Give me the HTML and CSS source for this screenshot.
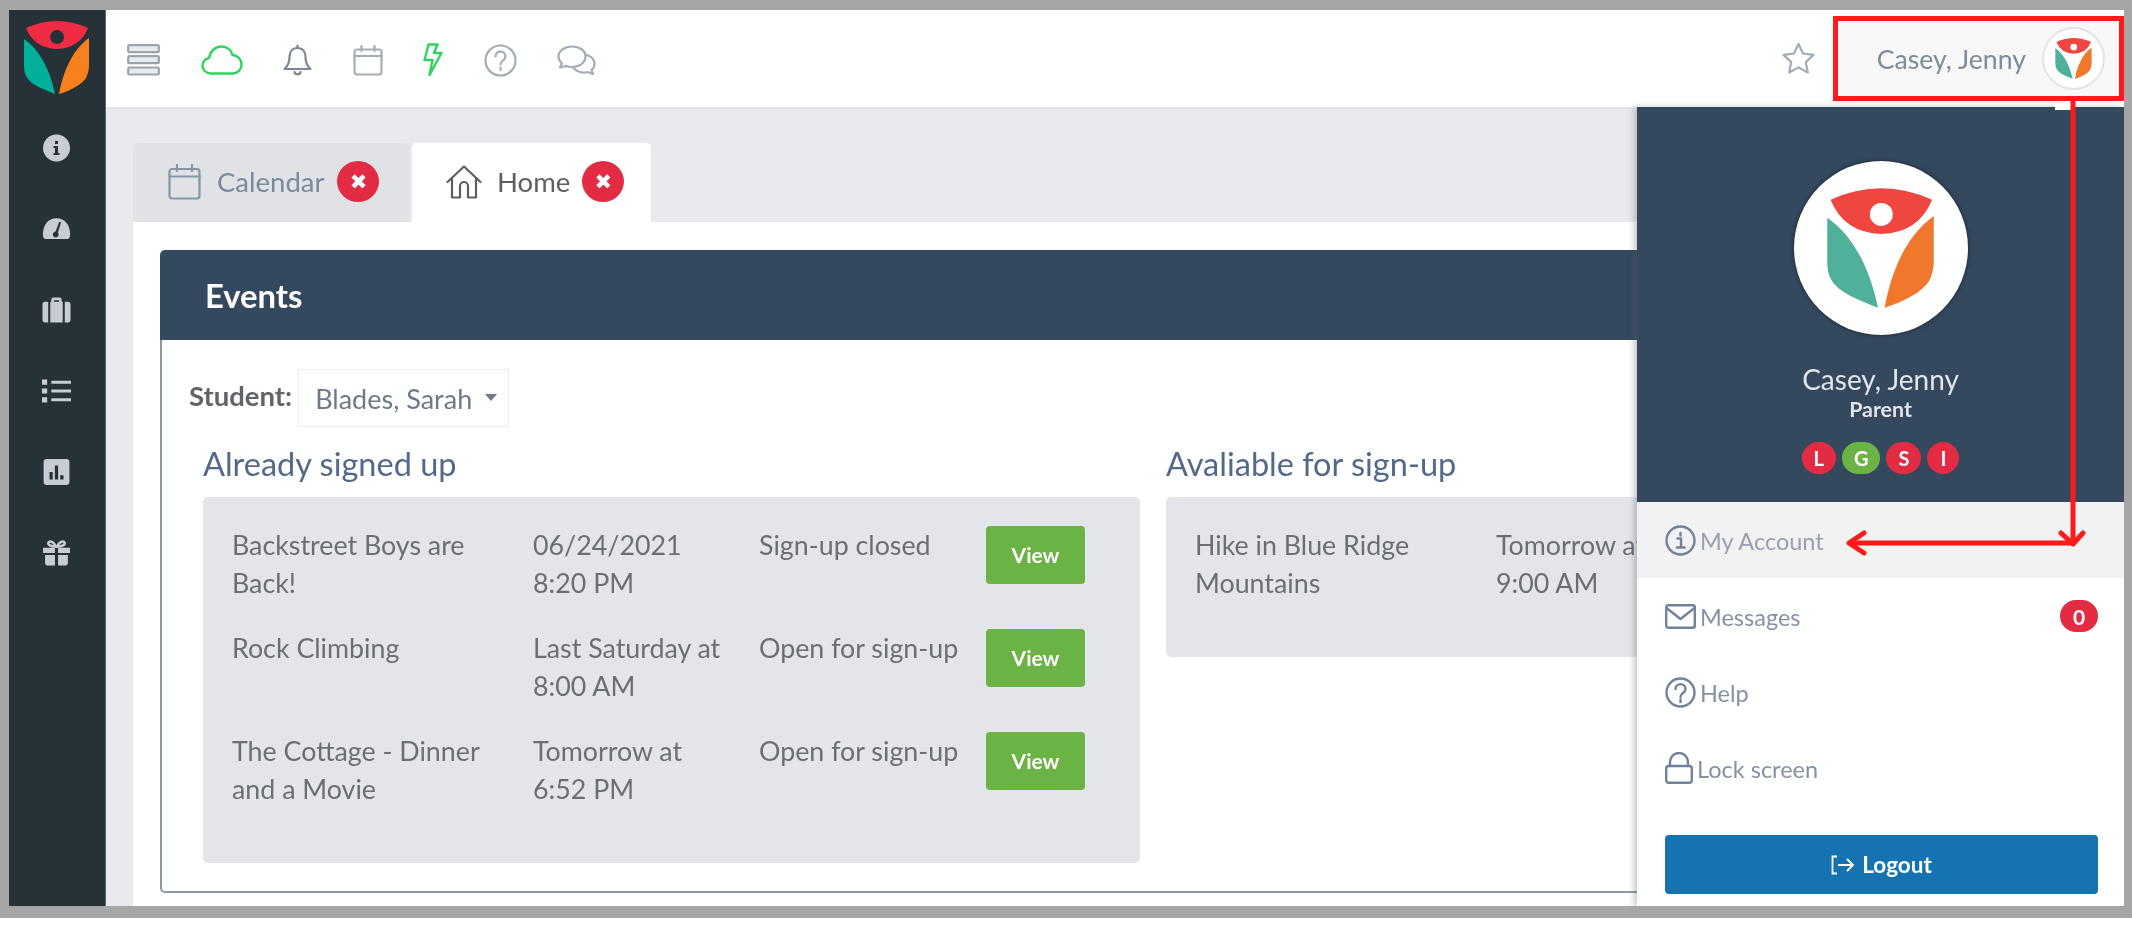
FILE: index.html
```html
<!DOCTYPE html>
<html lang="en">
<head>
<meta charset="utf-8">
<title>Events</title>
<link rel="stylesheet" href="styles.css">
</head>
<body>
<div class="shot">
  <div class="app">
    <aside class="sidebar">
      <svg class="side-logo" viewBox="0 0 65 73">
        <g transform="translate(-24 -21)">
          <path fill="#f02c45" d="M26 28Q57 14 88 28Q80 48 57 49Q34 48 26 28Z"/>
          <circle fill="#263238" cx="57" cy="37" r="7"/>
          <path fill="#00b09b" d="M24 39C40 50 50 70 55 94C40 88 30 84 26 76Q24 72 24 66Z"/>
          <path fill="#f7811c" d="M89 38C72 50 63 72 59 94C72 90 82 84 86 78Q89 72 89 66Z"/>
        </g>
      </svg>
      <nav class="side-nav">
        <svg class="side-icon" viewBox="0 0 28 28"><circle cx="14" cy="14" r="13.5"/><path class="cut" d="M12.5 7h3v3h-3zM11 12h4.500v7H17v2h-6v-2h1.500v-5H11z"/></svg>
        <svg class="side-icon" viewBox="0 0 32 28"><path d="M16 2C7 2 1 9 1 20c0 3 1 5 3 5h24c2 0 3-2 3-5C31 9 25 2 16 2Z"/><path class="cut" d="M19 6l2 .8-3.500 11a3.200 3.200 0 1 1-2.500-1Z"/></svg>
        <svg class="side-icon" viewBox="0 0 28 26"><path d="M9 5V3a2 2 0 0 1 2-2h6a2 2 0 0 1 2 2v2h1v20H8V5Zm2.500 0h5V3.500h-5ZM6 5v20H3a2.500 2.500 0 0 1-2.500-2.500v-15A2.500 2.500 0 0 1 3 5Zm16 0h3a2.500 2.500 0 0 1 2.500 2.500v15A2.500 2.500 0 0 1 25 25h-3Z"/></svg>
        <svg class="side-icon" viewBox="0 0 28 24"><path d="M0 1h5v5H0zM9 2h19v3H9zM0 9.500h5v5H0zM9 10.500h19v3H9zM0 18h5v5H0zM9 19h19v3H9z"/></svg>
        <svg class="side-icon" viewBox="0 0 26 26"><rect x="1" y="1" width="24" height="24" rx="3"/><path class="cut" d="M6.500 13h3v7h-3zM11.500 7h3v13h-3zM16.500 16h3v4h-3z"/></svg>
        <svg class="side-icon" viewBox="0 0 28 26"><path d="M1 8h11.500v5H1zM15.500 8H27v5H15.500zM3 15h9.500v10H5a2 2 0 0 1-2-2zM15.500 15H25v8a2 2 0 0 1-2 2h-7.500z"/><path class="bow" d="M13.500 7C11 2 8 1 6.500 2.500S7 7 13.500 7c1-.1 0 0 1 0C21 7 23 4 21.500 2.500S17 2 14.500 7"/></svg>
      </nav>
    </aside>

    <main class="main">
      <header class="topbar">
        <div class="tools">
          <svg class="tool" width="33" height="32" viewBox="0 0 33 32"><g class="line-bars"><rect x="1.200" y="1.200" width="30.600" height="7" rx="1"/><rect x="1.200" y="12.200" width="30.600" height="7" rx="1"/><rect x="1.200" y="23.500" width="30.600" height="7" rx="1"/></g></svg>
          <svg class="tool" width="42" height="30" viewBox="0 0 42 30"><path class="line-green" d="M10 28.500C4.500 28.500 1.500 24.500 1.500 20.500c0-4 3-7 6.500-7.500C9 6.500 14 1.500 20.500 1.500c5.500 0 10 3.500 11 8.500 5.500.5 9 4.500 9 9.500 0 5-3.500 9-9.500 9Z"/></svg>
          <svg class="tool" width="29" height="33" viewBox="0 0 29 33"><g class="line-dark"><path d="M14.500 4C9 4 6.500 8 6.500 13c0 6-1.500 9-5 12h26c-3.500-3-5-6-5-12 0-5-2.500-9-8-9Z"/><path d="M14.500 1.500V4M11.500 28c.5 3 5.500 3 6 0"/></g></svg>
          <svg class="tool" width="30" height="31" viewBox="0 0 30 31"><g class="line-gray"><rect x="1.500" y="4.500" width="27" height="25" rx="2.500"/><path d="M1.500 11h27M8.500 1v5M21.500 1v5"/></g></svg>
          <svg class="tool" width="20" height="34" viewBox="0 0 20 34"><path class="line-green" d="M5.500 1.500h9L11 10h7.500L6.500 32l3-15H1.500Z"/></svg>
          <svg class="tool" width="33" height="33" viewBox="0 0 33 33"><g class="line-gray"><circle cx="16.500" cy="16.500" r="15"/><path d="M11.500 12.500c0-6.500 10-6.500 10 0 0 4-5 4-5 8"/><path d="M16.500 23.500v2.500"/></g></svg>
          <svg class="tool" width="39" height="30" viewBox="0 0 39 30"><g class="line-gray"><path d="M15 1.500C7.500 1.500 1.500 6 1.500 11.500c0 3 1.500 5 3.500 7L3 22.500l6-1.500c2 .8 4 1 6 1 7.500 0 13.500-4.500 13.500-10.500S22.500 1.500 15 1.500Z"/><path d="M30 10c4.500 1.500 7.500 5 7.500 9 0 2.500-1 4.500-3 6l1.500 4-5.500-2c-5 1.500-11 0-14-4"/></g></svg>
        </div>
        <div class="top-right">
          <svg class="star" width="33" height="33" viewBox="0 0 33 33"><path class="line-gray" d="M16.500 2l4.500 9.500 10.500 1.400-7.700 7.200 2 10.400-9.300-5.100-9.300 5.100 2-10.400L1.500 12.900 12 11.500Z"/></svg>
          <div class="user">
            <span class="user-name">Casey, Jenny</span>
            <span class="avatar-small">
              <svg class="logo-small" viewBox="22 19 69 77">
                <path fill="#ef4640" d="M26 28Q57 14 88 28Q80 48 57 49Q34 48 26 28Z"/>
                <circle fill="#fff" cx="57" cy="37" r="6"/>
                <path fill="#4fb09b" d="M24 39C40 50 50 70 55 94C40 88 30 84 26 76Q24 72 24 66Z"/>
                <path fill="#f0782d" d="M89 38C72 50 63 72 59 94C72 90 82 84 86 78Q89 72 89 66Z"/>
              </svg>
            </span>
          </div>
        </div>
      </header>

      <section class="content">
        <div class="tabs">
          <div class="tab tab-off">
            <svg class="tab-icon" width="33" height="36" viewBox="0 0 33 36"><g class="line-blue"><rect x="1.500" y="5" width="30" height="29.500" rx="2.500"/><path d="M1.500 12.500h30M9 1v6M24 1v6"/></g></svg>
            <span>Calendar</span>
            <span class="close">&#10006;</span>
          </div>
          <div class="tab tab-on">
            <svg class="tab-icon" width="36" height="34" viewBox="0 0 36 34"><g class="line-home"><path d="M1.500 17L18 1.500 34.500 17"/><path d="M6 14v18.500h8V21a4 4 0 0 1 8 0v11.500h8V14"/></g></svg>
            <span>Home</span>
            <span class="close">&#10006;</span>
          </div>
        </div>
        <div class="tabpanel">
          <article class="panel">
            <h2 class="panel-head">Events</h2>
            <div class="panel-body">
              <div class="student">
                <span class="student-label">Student:</span>
                <span class="select">Blades, Sarah<i class="caret"></i></span>
              </div>
              <div class="columns">
                <div>
                  <h3 class="col-title">Already signed up</h3>
                  <div class="box">
                    <div class="row">
                      <div class="cell-name">Backstreet Boys are Back!</div>
                      <div>06/24/2021<br>8:20 PM</div>
                      <div>Sign-up closed</div>
                      <a class="view">View</a>
                    </div>
                    <div class="row">
                      <div class="cell-name">Rock Climbing</div>
                      <div>Last Saturday at<br>8:00 AM</div>
                      <div>Open for sign-up</div>
                      <a class="view">View</a>
                    </div>
                    <div class="row">
                      <div class="cell-name">The Cottage - Dinner and a Movie</div>
                      <div>Tomorrow at<br>6:52 PM</div>
                      <div>Open for sign-up</div>
                      <a class="view">View</a>
                    </div>
                  </div>
                </div>
                <div>
                  <h3 class="col-title">Avaliable for sign-up</h3>
                  <div class="box">
                    <div class="row">
                      <div class="cell-name">Hike in Blue Ridge Mountains</div>
                      <div>Tomorrow at<br>9:00 AM</div>
                    </div>
                  </div>
                </div>
              </div>
            </div>
          </article>
        </div>
      </section>

      <div class="dropdown">
        <i class="notch"></i>
        <div class="profile">
          <span class="avatar-big">
            <svg class="logo-big" viewBox="22 19 69 77">
              <path fill="#ef4640" d="M26 28Q57 14 88 28Q80 48 57 49Q34 48 26 28Z"/>
              <circle fill="#fff" cx="57" cy="37" r="7"/>
              <path fill="#4fb09b" d="M24 39C40 50 50 70 55 94C40 88 30 84 26 76Q24 72 24 66Z"/>
              <path fill="#f0782d" d="M89 38C72 50 63 72 59 94C72 90 82 84 86 78Q89 72 89 66Z"/>
            </svg>
          </span>
          <div class="profile-name">Casey, Jenny</div>
          <div class="profile-role">Parent</div>
          <div class="pills">
            <span class="pill">L</span><span class="pill pill-green">G</span><span class="pill">S</span><span class="pill">I</span>
          </div>
        </div>
        <ul class="menu">
          <li class="menu-item menu-active">
            <svg width="31" height="31" viewBox="0 0 31 31"><g class="line-menu"><circle cx="15.500" cy="15.500" r="14"/><path d="M12.500 13.500h3.500v9M12 22.500h7.500M15.500 8v2.500"/></g></svg>
            <span>My Account</span>
          </li>
          <li class="menu-item">
            <svg width="31" height="25" viewBox="0 0 31 25"><g class="line-menu"><rect x="1.200" y="1.200" width="28.600" height="22.600" rx="2"/><path d="M1.500 4l14 11 14-11"/></g></svg>
            <span>Messages</span>
            <b class="count">0</b>
          </li>
          <li class="menu-item">
            <svg width="31" height="31" viewBox="0 0 31 31"><g class="line-menu"><circle cx="15.500" cy="15.500" r="14"/><path d="M10.500 12c0-6.500 10-6.500 10 0 0 4-5 4-5 8"/><path d="M15.500 22.500v2.500"/></g></svg>
            <span>Help</span>
          </li>
          <li class="menu-item">
            <svg width="28" height="32" viewBox="0 0 28 32"><g class="line-menu"><rect x="1.200" y="14" width="25.600" height="16.800" rx="2.500"/><path d="M5 14V10a9 9 0 0 1 18 0v4"/></g></svg>
            <span>Lock screen</span>
          </li>
        </ul>
        <a class="logout">
          <svg width="24" height="20" viewBox="0 0 24 20"><path class="logout-icon" d="M6 1.500H1.500v17H6M7 10h15M16 4l6 6-6 6"/></svg>
          <span>Logout</span>
        </a>
      </div>
    </main>
  </div>

  <div class="callout-box"></div>
  <svg class="callout-arrow" viewBox="0 0 240 450" width="240" height="450">
    <path class="callout-line" d="M230 0V443H8"/>
    <path class="callout-line" d="M218 433L230 444L240 433M21 433L6 443L21 453"/>
  </svg>
</div>
</body>
</html>
```
FILE: styles.css
```css
* { box-sizing: border-box; }
html, body { margin: 0; padding: 0; }
body {
  width: 2132px;
  height: 925px;
  overflow: hidden;
  background: #fff;
  font-family: Lato, "Open Sans", sans-serif;
  color: #676a6c;
}
h2, h3, ul { margin: 0; padding: 0; }
ul { list-style: none; }

.shot {
  position: relative;
  height: 918px;
  padding: 10px 8px 12px 9px;
  background: #a6a6a6;
}
.app {
  display: flex;
  width: 2115px;
  height: 896px;
  overflow: hidden;
  background: #fff;
  filter: blur(0.7px);
}

/* sidebar */
.sidebar {
  flex: none;
  width: 97px;
  display: flex;
  flex-direction: column;
  align-items: center;
  padding: 11px 2px 0 0;
  background: #263238;
  border-right: 1px solid #5f6a74;
}
.side-logo { width: 65px; height: 73px; margin-bottom: 40px; }
.side-nav {
  display: flex;
  flex-direction: column;
  align-items: center;
  gap: 53px;
}
.side-icon { display: block; width: 29px; height: 28px; fill: #c8ccd4; }
.side-icon .cut { fill: #263238; }
.side-icon .bow { fill: none; stroke: #c8ccd4; stroke-width: 2.4; }

/* top bar */
.main { position: relative; flex: 1; display: flex; flex-direction: column; min-width: 0; }
.topbar {
  flex: none;
  height: 99px;
  display: flex;
  align-items: center;
  justify-content: space-between;
  padding-left: 21px;
  background: #fff;
  border-bottom: 2px solid #e1e3e6;
}
.tools { display: flex; align-items: center; gap: 40.5px; padding-top: 3px; }
.tool { display: block; flex: none; }
.line-bars, .line-gray, .line-dark, .line-green, .line-blue, .line-home, .line-menu {
  fill: none;
  stroke-width: 2.2;
  stroke-linecap: round;
  stroke-linejoin: round;
}
.line-bars { stroke: #98a4ae; fill: #e9ecef; }
.line-gray { stroke: #a3adb6; }
.line-dark { stroke: #7d8892; }
.line-green { stroke: #2fd45f; stroke-width: 2.4; }
.line-blue { stroke: #8595aa; }
.line-home { stroke: #5c6066; }
.line-menu { stroke: #71829a; stroke-width: 2.4; }

.top-right { display: flex; align-items: center; }
.star { margin-right: 22px; }
.user {
  display: flex;
  align-items: center;
  justify-content: flex-end;
  gap: 16px;
  width: 287px;
  height: 83px;
  padding-right: 19px;
  background: #f8f8f8;
}
.user-name { font-size: 26.7px; color: #7f8c99; }
.avatar-small {
  width: 63px;
  height: 63px;
  display: flex;
  align-items: center;
  justify-content: center;
  border-radius: 50%;
  background: #fff;
  border: 2px solid #e3e4e4;
}
.logo-small { width: 39px; height: 43px; }

/* tabs */
.content {
  flex: 1;
  display: flex;
  flex-direction: column;
  min-height: 0;
  padding: 34px 0 0 27px;
  background: #e8eaee;
}
.tabs { flex: none; display: flex; gap: 2px; height: 79px; }
.tab {
  display: flex;
  align-items: center;
  padding: 0 27px 2px 34px;
  border-radius: 5px 5px 0 0;
  font-size: 27.5px;
}
.tab-off { width: 277px; padding-left: 35px; background: #e0e2e6; color: #7a899c; }
.tab-on { width: 239px; background: #fff; color: #5c6066; }
.tab-icon { flex: none; margin-right: 15px; }
.tab-off .tab-icon { margin-right: 16px; }
.close {
  flex: none;
  width: 42px;
  height: 41px;
  margin-left: 13px;
  display: flex;
  align-items: center;
  justify-content: center;
  border-radius: 50%;
  background: #e32b44;
  color: #fff;
  font-size: 21px;
  font-family: "DejaVu Sans", sans-serif;
}
.tab-on .close { margin-left: 12px; }

/* panel */
.tabpanel { flex: 1; min-height: 0; padding: 28px 12px 13px 27px; background: #fff; }
.panel { display: flex; flex-direction: column; height: 100%; }
.panel-head {
  flex: none;
  height: 90px;
  display: flex;
  align-items: center;
  padding-left: 45px;
  border-radius: 5px 5px 0 0;
  background: #34485e;
  color: #fff;
  font-size: 32.8px;
  font-weight: 700;
}
.panel-body {
  flex: 1;
  padding: 29px 11px 0 27px;
  border: 2px solid #8d96a1;
  border-top: 0;
  border-radius: 0 0 5px 5px;
}
.student { display: flex; align-items: center; gap: 6px; }
.student-label { font-size: 27.5px; font-weight: 700; color: #5f6468; position: relative; top: -3px; }
.select {
  display: flex;
  align-items: center;
  width: 211px;
  height: 58px;
  padding-left: 16px;
  border: 1px solid #eceef0;
  font-size: 27px;
  color: #6e7a88;
}
.caret {
  margin: -2px 0 0 13px;
  border-left: 6.5px solid transparent;
  border-right: 6.5px solid transparent;
  border-top: 7px solid #6e7a88;
}
.columns {
  display: grid;
  grid-template-columns: 937px 936px;
  gap: 26px;
  margin: 17px 0 0 14px;
}
.col-title {
  height: 40px;
  margin-bottom: 13px;
  font-size: 32.5px;
  font-weight: 400;
  line-height: 40px;
  color: #54698a;
}
.box {
  display: flex;
  flex-direction: column;
  gap: 27px;
  padding: 29px 0 55px 29px;
  border-radius: 5px;
  background: #e4e5ea;
  font-size: 26.8px;
  line-height: 38px;
  color: #6a6f76;
}
.row {
  display: grid;
  grid-template-columns: 301px 226px 227px 99px;
  align-items: start;
}
.cell-name { padding-right: 26px; }
.view {
  display: flex;
  align-items: center;
  justify-content: center;
  height: 58px;
  border-radius: 4px;
  background: #6ab344;
  color: #fff;
  font-size: 21px;
  font-weight: 700;
}

/* dropdown */
.dropdown {
  position: absolute;
  top: 97px;
  right: 0;
  bottom: 0;
  width: 487px;
  display: flex;
  flex-direction: column;
  background: #fff;
  box-shadow: -3px 0 6px rgba(90, 95, 105, 0.35);
}
.notch {
  position: absolute;
  top: -4px;
  left: 418px;
  width: 18px;
  height: 7px;
  background: #fff;
}
.profile {
  flex: none;
  height: 395px;
  display: flex;
  flex-direction: column;
  align-items: center;
  padding-top: 54px;
  background: #34485e;
}
.avatar-big {
  flex: none;
  width: 174px;
  height: 174px;
  display: flex;
  align-items: center;
  justify-content: center;
  border-radius: 50%;
  background: #fff;
  box-shadow: 0 0 4px rgba(0, 0, 0, 0.5);
}
.logo-big { width: 113px; height: 130px; }
.profile-name { margin-top: 29px; font-size: 28px; line-height: 30px; color: #e2e5e9; }
.profile-role { margin-top: 3px; font-size: 21.4px; line-height: 24px; color: #e2e5e9; font-weight: 700; }
.pills { display: flex; gap: 6px; margin-top: 21px; }
.pill {
  min-width: 32px;
  height: 32px;
  padding: 0 12px;
  display: flex;
  align-items: center;
  justify-content: center;
  border-radius: 16px;
  background: #e32b44;
  color: #fff;
  font-size: 20px;
  font-weight: 700;
}
.pill-green { background: #6ab344; }
.menu-item {
  display: flex;
  align-items: center;
  gap: 4px;
  height: 76px;
  padding: 0 26px 0 28px;
  font-size: 23.5px;
  color: #8692a2;
}
.menu-item span { margin-top: 2px; }
.menu-active { background: #f2f2f2; color: #98a1ad; }
.count {
  margin-left: auto;
  width: 38px;
  height: 32px;
  display: flex;
  align-items: center;
  justify-content: center;
  border-radius: 16px;
  background: #e32b44;
  color: #fff;
  font-size: 21px;
}
.logout {
  flex: none;
  height: 59px;
  margin: 29px 26px 0 28px;
  display: flex;
  align-items: center;
  justify-content: center;
  gap: 7px;
  border-radius: 4px;
  background: #1573b2;
  color: #fff;
  font-size: 22.5px;
  font-weight: 700;
}
.logout-icon { fill: none; stroke: #fff; stroke-width: 1.8; }

/* annotation drawn on top of the screenshot */
.callout-box {
  position: absolute;
  left: 1833px;
  top: 16px;
  width: 291px;
  height: 85px;
  border: 5px solid #ff1a1a;
}
.callout-arrow { position: absolute; left: 1843px; top: 100px; overflow: visible; }
.callout-line { fill: none; stroke: #ff1a1a; stroke-width: 5; stroke-linejoin: round; stroke-linecap: round; }
```
